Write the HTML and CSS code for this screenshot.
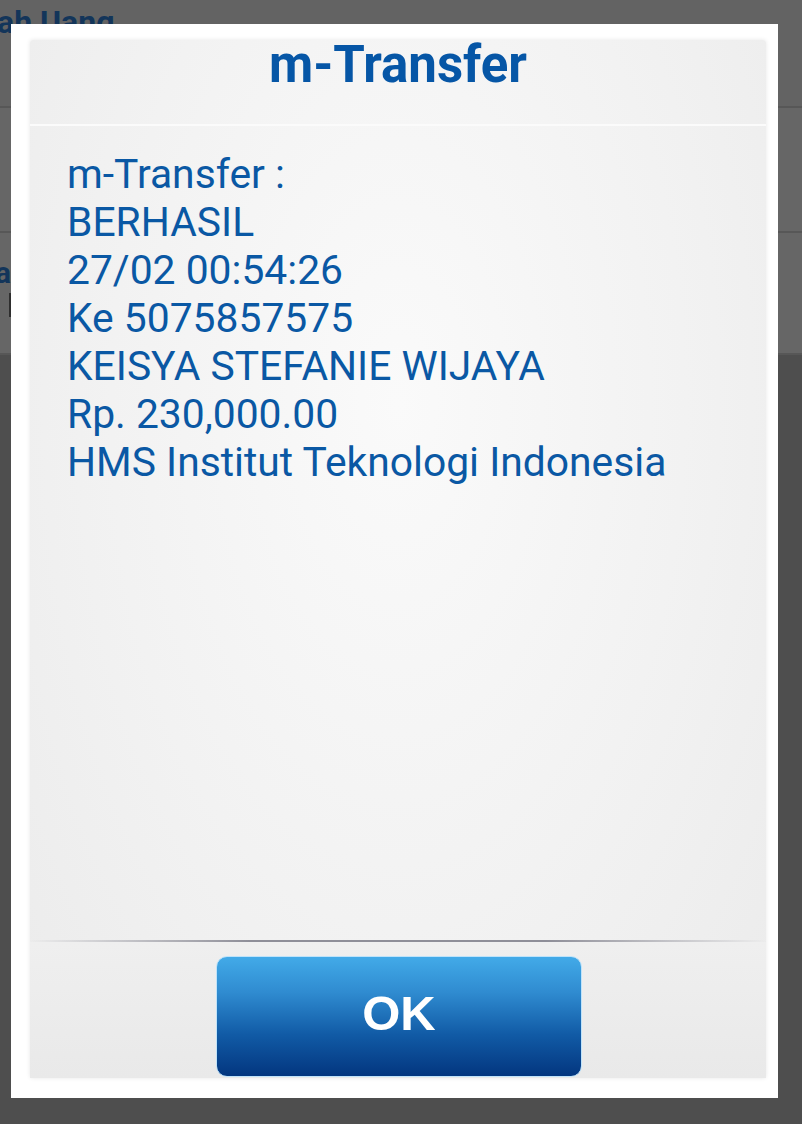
FILE: index.html
```html
<!DOCTYPE html>
<html>
<head>
<meta charset="utf-8">
<link rel="stylesheet" href="styles.css">
</head>
<body>
<div class="app">
  <div class="app-header"><span class="app-title">ah Uang</span></div>
  <div class="app-row"></div>
  <div class="app-row app-row-2"><span class="app-label">a</span><span class="app-field"></span></div>
  <div class="app-rest"></div>
</div>

<div class="dialog">
  <div class="panel">
    <div class="panel-head">m-Transfer</div>
    <div class="panel-body">
      <div>m-Transfer :</div>
      <div>BERHASIL</div>
      <div>27/02 00:54:26</div>
      <div>Ke 5075857575</div>
      <div>KEISYA STEFANIE WIJAYA</div>
      <div>Rp. 230,000.00</div>
      <div>HMS Institut Teknologi Indonesia</div>
    </div>
    <div class="panel-foot">
      <button class="ok">OK</button>
    </div>
  </div>
</div>
</body>
</html>
```

FILE: styles.css
```css
html, body {
  margin: 0;
  padding: 0;
}
body {
  width: 802px;
  height: 1124px;
  overflow: hidden;
  background: #4e4e4e;
  position: relative;
  font-family: Roboto, "Liberation Sans", sans-serif;
}
.app {
  display: flex;
  flex-direction: column;
  height: 100%;
}
.app-header {
  height: 106px;
  background: #636363;
  border-bottom: 2px solid #575757;
  position: relative;
  overflow: hidden;
}
.app-title {
  display: block;
  margin-left: -3px;
  margin-top: 3px;
  font-family: Roboto, sans-serif;
  font-weight: 700;
  font-size: 32px;
  color: #13355a;
}
.app-row {
  height: 123px;
  background: #666666;
  border-bottom: 2px solid #575757;
}
.app-row-2 {
  height: 120px;
  display: flex;
  flex-direction: column;
  position: relative;
}
.app-label {
  margin-top: 20px;
  margin-left: -5px;
  font-weight: 700;
  font-size: 30px;
  color: #13355a;
  line-height: 40px;
}
.app-field {
  width: 3px;
  height: 24px;
  margin-left: 9px;
  margin-top: 0;
  background: #2e2e2e;
}
.app-rest {
  flex: 1;
  background: #4e4e4e;
}

.dialog {
  position: absolute;
  left: 11px;
  top: 24px;
  width: 767px;
  height: 1074px;
  background: #ffffff;
  box-sizing: border-box;
  padding: 16px 12px 20px 19px;
  display: flex;
}
.panel {
  flex: 1;
  display: flex;
  flex-direction: column;
  background: radial-gradient(ellipse at 50% 35%, #fafafa 0%, #f2f2f2 55%, #ebebeb 100%);
  box-shadow: 0 0 4px rgba(0, 0, 0, 0.10);
  border-radius: 3px;
}
.panel-head {
  height: 86px;
  box-sizing: border-box;
  padding-top: 0;
  text-align: center;
  font-weight: 700;
  font-size: 51px;
  line-height: 50px;
  color: #0656a6;
  border-bottom: 2px solid #fbfbfb;
}
.panel-body {
  flex: 1;
  padding: 24px 0 0 37px;
  font-size: 40.8px;
  line-height: 48px;
  color: #0a58a4;
  border-bottom: 2px solid transparent;
  border-image: linear-gradient(90deg, rgba(150,150,160,0) 0%, #8e8e98 30%, #8e8e98 70%, rgba(150,150,160,0) 100%) 1;
}
.panel-foot {
  height: 136px;
  box-sizing: border-box;
  padding-top: 14px;
  display: flex;
  justify-content: center;
  background: linear-gradient(180deg, #efefef, #e9e9e9);
}
.ok {
  width: 366px;
  height: 121px;
  border: 1px solid #bfe3fa;
  border-radius: 11px;
  background: linear-gradient(180deg, #42aae8 0%, #2f8bd0 30%, #115ba6 65%, #03367f 100%);
  color: #ffffff;
  font-family: "Liberation Sans", Arial, sans-serif;
  font-weight: 700;
  font-size: 49px;
  line-height: 1;
  padding: 0 0 6px 0;
  margin-left: 2px;
}
```
